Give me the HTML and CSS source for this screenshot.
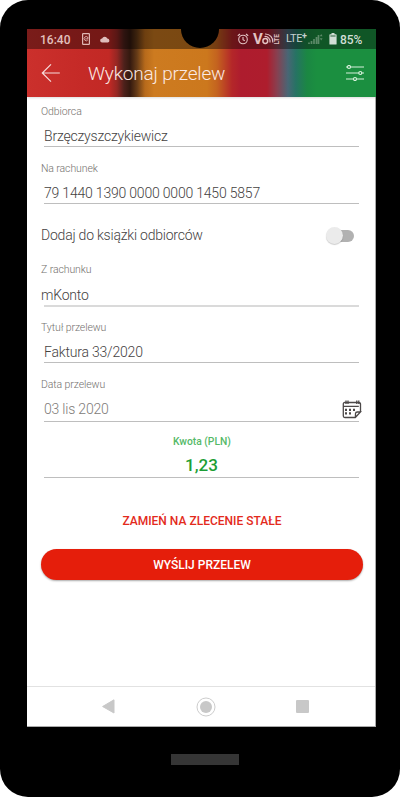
FILE: index.html
```html
<!DOCTYPE html>
<html lang="pl">
<head>
<meta charset="utf-8">
<title>Wykonaj przelew</title>
<link rel="stylesheet" href="styles.css">
</head>
<body>
<div class="phone">
  <div class="screen">
    <header class="top">
      <div class="status">
        <span class="clock">16:40</span>
        <svg class="sim" width="8" height="12" viewBox="0 0 8 12" fill="none" stroke="#e0b6b3"><rect x=".6" y=".6" width="6.8" height="10.8" rx=".6" stroke-width="1.2"/><path d="M5.7 4.2A2.1 2.1 0 1 0 5.8 7M3.2 5.9h2.6V4" stroke-width=".9"/></svg>
        <svg class="cloud" width="10" height="7" viewBox="0 0 10 7" fill="#dfbdbb"><path d="M2.2 6.5a2 2 0 0 1-.1-4A2.8 2.8 0 0 1 7.3 2.6 2 2 0 0 1 8 6.500z"/></svg>
        <svg class="alarm" width="12" height="12" viewBox="0 0 12 12" fill="none" stroke="#e2c2c2" stroke-width="1.1"><circle cx="6" cy="6.5" r="4.3"/><path d="M6 4v2.700l1.800 1M.8 2.800 3 1M11.200 2.800 9 1"/></svg>
        <span class="vo"><b>V</b><svg width="12" height="12" viewBox="0 0 12 12" fill="none" stroke="#e2c2c2"><circle cx="3.300" cy="8" r="2.400" stroke-width="1.500"/><path d="M2.500 3.500A5 5 0 0 1 8 9.500M3 1A7.500 7.500 0 0 1 10.800 9.500" stroke-width="1.200"/></svg></span>
        <span class="side">LTE</span>
        <span class="lte">LTE<sup>+</sup></span>
        <svg class="signal" width="15" height="12" viewBox="0 0 15 12"><path d="M1 11V9.500M3.500 11V8M6 11V6M8.500 11V4M10.500 11V2" stroke="#5c8a68" stroke-width="1.700"/><path d="m13.200 1 1.400 2.200h-2.800zM13.200 7.500l1.400-2.200h-2.800z" fill="#5c8a68"/></svg>
        <svg class="battery" width="8" height="12" viewBox="0 0 8 12" fill="#d2dfd5"><path d="M2.500 0h3v1.300H7q.6 0 .6.600v9q0 .6-.6.600H1q-.6 0-.6-.6v-9q0-.6.600-.6h1.500z"/><path d="M1.400 3h5.200" stroke="#175329" stroke-width=".9"/></svg>
        <span class="percent">85%</span>
      </div>
      <div class="appbar">
        <svg class="back" width="20" height="20" viewBox="0 0 20 20" fill="none" stroke="#f6dcdb" stroke-width="1.200"><path d="M18.800 10H1.300M10 1.300 1.300 10l8.700 8.700"/></svg>
        <h1>Wykonaj przelew</h1>
        <svg class="filter" width="18" height="16" viewBox="0 0 18 16" fill="none" stroke="#d8f0dc" stroke-width="1.200"><path d="M0 2h1.600M4.400 2H18M0 8h13M15.800 8H18M0 14h7.500M10.500 14H18"/><circle cx="3" cy="2" r="1.500"/><circle cx="14.300" cy="8" r="1.500"/><circle cx="9" cy="14" r="1.500"/></svg>
      </div>
    </header>
    <main class="form">
      <div class="field"><label>Odbiorca</label><div class="value">Brzęczyszczykiewicz</div></div>
      <div class="field"><label>Na rachunek</label><div class="value">79 1440 1390 0000 0000 1450 5857</div></div>
      <div class="toggle-row"><span>Dodaj do książki odbiorców</span><i class="switch"></i></div>
      <div class="field source"><label>Z rachunku</label><div class="value">mKonto</div></div>
      <div class="field title"><label>Tytuł przelewu</label><div class="value">Faktura 33/2020</div></div>
      <div class="field date"><label>Data przelewu</label><div class="value"><span>03 lis 2020</span>
        <svg width="20" height="19" viewBox="0 0 20 19" fill="none" stroke="#4c4848" stroke-width="1.300"><path d="M18.500 12V4Q18.500 2.500 17 2.500H2.800Q1.300 2.500 1.300 4v12q0 1.500 1.500 1.500h10.500l5.200-5.500h-3.200q-1.700 0-1.800 1.600l-.1 3.700M1.300 6.300h15.500M4 .6v3.300M6 .6v3.300M14.800.6v3.300M16.800.6v3.300"/><path d="M3 9.800h10M3 13.300h6" stroke-width="2.200" stroke-dasharray="2 2"/></svg></div></div>
      <div class="field amount"><label>Kwota (PLN)</label><div class="value">1,23</div></div>
      <div class="convert">ZAMIEŃ NA ZLECENIE STAŁE</div>
      <button class="send">WYŚLIJ PRZELEW</button>
    </main>
    <nav class="nav">
      <svg width="13" height="15" viewBox="0 0 13 15"><path d="M12 .8v13.200L.6 7.500z" fill="#c8c8c8" stroke="#c8c8c8" stroke-linejoin="round"/></svg>
      <svg width="20" height="20" viewBox="0 0 20 20"><circle cx="10" cy="10" r="9" fill="none" stroke="#cdcdcd"/><circle cx="10" cy="10" r="6" fill="#c8c8c8"/></svg>
      <i class="recent"></i>
    </nav>
  </div>
  <div class="notch"></div>
  <div class="home"></div>
</div>
</body>
</html>
```
FILE: styles.css
```css
* { box-sizing: border-box; }
body { margin: 0; background: #fff; font-family: Roboto, "Noto Sans", sans-serif; }
svg { display: block; flex: none; }
.phone { position: relative; width: 400px; height: 797px; padding: 29px 0 0 27px; background: #000; border-radius: 28px; overflow: hidden; }
.screen { display: flex; flex-direction: column; width: 349px; height: 698px; background: #fff; border-right: 1px solid #aaa; border-bottom: 1px solid #aaa; }
.notch { position: absolute; left: 181px; top: 11px; width: 38px; height: 37px; border-radius: 50%; background: #000; }
.home { width: 68px; height: 11px; margin: 27px 0 0 144px; background: #353535; }
.top { width: 349px; height: 68px; flex: none; box-shadow: 0 1px 2px #0002; background: linear-gradient(90deg, #cb302c 0, #c52a27 55px, #c22925 82px, #952723 90px, #4d211b 97px, #34190f 103px, #663b17 110px, #b76a1b 118px, #cd7b20 127px, #cc781d 180px, #c4631f 190px, #b42729 205px, #ae1c2e 214px, #ae1d2d 240px, #884050 250px, #486675 261px, #267363 269px, #1b8743 280px, #1b8f40 290px, #1b8f40 100%); }
.status { display: flex; align-items: center; height: 20px; background: #0006; color: #e2c2c2; font-size: 12px; line-height: 20px; }
.clock { width: 42px; margin-left: 13px; padding-top: 1px; letter-spacing: 0; font-weight: 500; color: #e3c0bd; }
.cloud { margin-left: 10px; }
.alarm { margin-left: 127px; }
.vo { display: flex; align-items: center; width: 20px; margin-left: 4px; font-size: 15px; }
.vo b { width: 9px; }
.side { width: 9px; font-size: 6.500px; line-height: 9px; writing-mode: vertical-rl; transform: rotate(180deg); font-weight: 700; text-align: center; }
.lte { width: 22px; margin-left: 4px; font-size: 11px; letter-spacing: -.4px; color: #c5d1cf; }
.lte sup { font-size: 9px; line-height: 0; font-weight: 700; vertical-align: 3px; }
.battery { margin-left: 6px; }
.percent { margin-left: 3px; padding-top: 1px; color: #d2dfd5; font-weight: 500; letter-spacing: -.1px; }
.appbar { display: flex; align-items: center; height: 48px; padding: 0 12px 0 14px; color: #fbe9e3; }
.appbar h1 { flex: 1; margin: 2px 0 0 27px; font-size: 19px; letter-spacing: -.18px; line-height: 24px; font-weight: 300; }
.form { flex: 1; padding: 7px 12px 0 14px; color: #45423f; }
.field { display: flex; flex-direction: column; gap: 8px; height: 43px; margin-bottom: 14px; }
.field label { padding-top: .5px; font-size: 10.500px; letter-spacing: -.1px; line-height: 14px; height: 14px; font-weight: 300; color: #74716e; }
.value { height: 21px; margin: 0 4px 0 3px; border-bottom: 1px solid #bebebe; font-size: 14px; letter-spacing: -.2px; line-height: 20px; font-weight: 300; }
.toggle-row { display: flex; align-items: center; justify-content: space-between; height: 58px; margin-top: -14px; padding: 4px 9px 0 0; font-size: 14px; letter-spacing: -.22px; font-weight: 300; }
.switch { position: relative; width: 26px; height: 12px; margin-top: 2px; border-radius: 6px; background: #b1b1b1; }
.switch::before { content: ""; position: absolute; left: -2px; top: -3px; width: 17px; height: 17px; border-radius: 50%; background: #ebebeb; box-shadow: 0 1px 1px #0003; }
.source { gap: 9px; height: 45px; }
.source .value { height: 22px; border-bottom: 2px solid #dadada; text-indent: -3px; }
.title { gap: 7px; height: 42px; margin-bottom: 15px; }
.date { gap: 7px; height: 44px; margin-bottom: 13px; }
.date .value { display: flex; justify-content: space-between; height: 23px; color: #7e7b78; line-height: 20px; }
.date svg { margin: 1px -3px 0 0; }
.amount { height: 43px; gap: 6px; text-align: center; }
.title label, .date label, .amount label { padding-top: 0; }
.amount label { color: #55b968; font-weight: 500; font-size: 10.300px; letter-spacing: 0; }
.amount .value { height: 23px; color: #1c9e35; font-size: 17px; letter-spacing: 0; line-height: 21px; font-weight: 500; }
.convert { margin-top: 35px; color: #e32a1c; font-size: 12px; line-height: 16px; font-weight: 500; text-align: center; }
.send { display: block; width: 322px; height: 31px; margin: 20px 0 0; padding: 1px 0 0; border: 0; border-radius: 16px; background: #e51e0b; box-shadow: 0 1px 2px #0005; color: #fff; font: 500 12px/16px Roboto, sans-serif; }
.nav { display: flex; align-items: center; height: 40px; padding: 0 66px 0 75px; border-top: 1px solid #e2e2e2; justify-content: space-between; }
.recent { width: 13px; height: 13px; border-radius: 1px; background: #c8c8c8; }
```
